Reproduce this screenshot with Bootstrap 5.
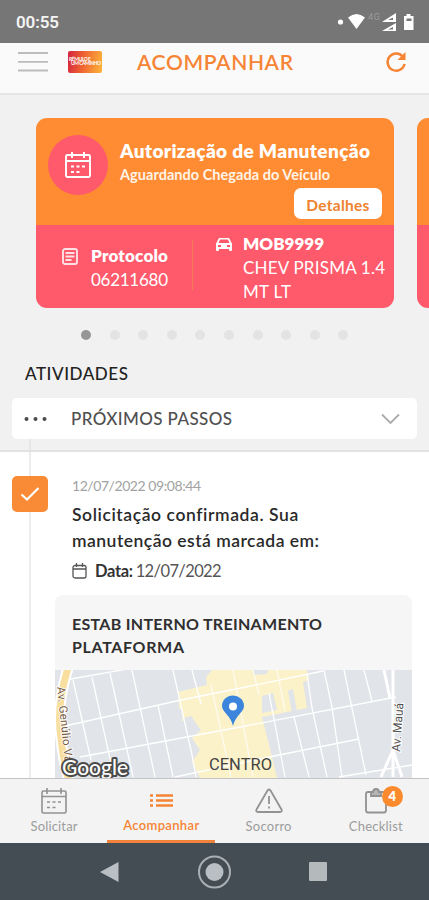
<!DOCTYPE html>
<html lang="pt-BR">
<head>
<meta charset="utf-8">
<meta name="viewport" content="width=device-width, initial-scale=1">
<title>Acompanhar</title>
<link href="https://cdn.jsdelivr.net/npm/bootstrap@5.3.0/dist/css/bootstrap.min.css" rel="stylesheet">
<style>
:root{--org:#ff8c33;--pink:#ff5a6b}
html,body{height:100%}
body{font-family:Lato,"Open Sans",sans-serif;background:#fff;overflow:hidden;color:#333}
svg{display:block;flex:none}
.t{white-space:nowrap;display:block}
.screen{height:900px;width:429px;overflow:hidden}
.statusbar{height:43px;background:#767676;padding:3px 14px 0 16px;font-family:Roboto,sans-serif}
.clock{font-size:17px;font-weight:600;color:#f4f4f4}
.topbar{height:52px;background:#fafafa;border-bottom:2px solid #e6e6e6;padding:0 22px 13px 18px}
.page-title{font-size:21px;font-weight:600;color:#f58434;line-height:24px}
.brand{width:34px;height:22px;border-radius:2px;background:linear-gradient(100deg,#d3233f,#ef6531 45%,#fdb63c);font-size:5px;line-height:4.6px;color:#fff;font-weight:700;padding:6px 0 0 1px;margin-left:20px}
.hero{height:357px;background:#f1f1f1;border-bottom:2px solid #e2e2e2;padding-top:23px}
.slide{width:358px;height:190px;border-radius:11px;overflow:hidden;color:#fff;flex:none}
.slide-top{height:107px;background:var(--org);padding:17px 12px 0}
.slide-bottom{height:83px;background:var(--pink)}
.disc{width:60px;height:60px;background:var(--pink)}
.ttl{font-size:19px;font-weight:800;line-height:24px}
.sub{font-size:14.5px;font-weight:700;line-height:18px;margin-top:3px;color:#fff3e6}
.btn-det{width:88px;height:31px;background:#fff;color:#ee8330;font-size:15.5px;font-weight:700;border-radius:7px;padding:0;line-height:35px;border:0}
.f17{font-size:17px;line-height:24px}
.f17 b{font-weight:800}
.rule{width:1px;height:50px;background:#f47a55}
.dots{gap:18.6px;padding-left:81px;margin-top:22px}
.dots i{width:10px;height:10px;border-radius:50%;background:#e3e3e3}
.dots i:first-child{background:#969696}
.section-name{font-size:17px;line-height:22px;font-weight:500;color:#222;margin:23px 0 0 25px}
.picker{height:41px;background:#fff;border-radius:5px;margin:13px 12px 0;padding:0 17px 0 12px;color:#505050;font-size:17px;font-weight:500}
.timeline{height:326px;overflow:hidden}
.rail{width:60px;flex:none;background:linear-gradient(#ededed,#ededed) 29px 0/2px 100% no-repeat;padding:24px 0 0 12px}
.tick{width:36px;height:36px;border-radius:5px;background:#f98b37}
.stamp{font-size:14px;line-height:18px;color:#a2a2a2}
.msg{font-size:17.5px;line-height:26px;color:#2a2a2a;font-weight:600}
.place{width:357px;margin-left:-5px;background:#f6f6f6;border-radius:8px 8px 0 0;color:#2f2f2f}
.place-name{font-size:16px;line-height:23px;font-weight:700;height:75px;padding:17px 0 0 17px}
.tabs{height:65px;background:#f3f3f3;border-top:1px solid #c4c4c4}
.tab{width:107.25px;color:#9c9c9c;font-size:13px;border-bottom:3px solid transparent;padding:9px 0 0 1px}
.tab.on{color:#f58434;border-color:#f08339;font-weight:600}
.tab .t{line-height:18px;margin-top:3px}
.tab.on .t{margin-top:2px}
.count{top:-2px;left:17px;width:21px;height:21px;background:#fb8a2c;color:#fff;font-size:13px;line-height:21px;font-weight:800}
.sysbar{height:57px;background:#444d54;gap:78px;padding-left:100px}
</style>
</head>
<body>
<div class="screen d-flex flex-column">
  <header class="statusbar d-flex align-items-center justify-content-between">
    <span class="clock t"><span id="a0">00:55</span></span>
    <svg width="78" height="22" viewBox="0 0 78 22" fill="#fff">
      <circle cx="3.500" cy="10" r="2.600"/>
      <path d="M11 5.500q8.500-7 17 0L19.500 17z"/>
      <text x="31" y="8" font-size="9" fill="#9b9b9b" textLength="12">4G</text>
      <path d="M59 1v9H45zM59 11v8H45z"/><path d="M56 5.500v2.500h-5zM56 15v2.500h-5z" fill="#767676"/>
      <path d="M69.500 2h4v2h3v14h-9.500V4h2.500z"/><path d="M69.500 6.500h5v2.500h-5z" fill="#777"/>
    </svg>
  </header>
  <nav class="topbar d-flex align-items-center">
    <svg width="30" height="22" viewBox="0 0 30 22" stroke="#bcbcbc" stroke-width="1.800"><path d="M0 2h30M0 10.800h30M0 19.500h30"/></svg>
    <div class="brand"><span class="t"><span id="d1">RÊMULO E</span></span><span class="t" style="margin-left:2px"><span id="d2">UM CAMINHO</span></span></div>
    <span class="page-title t" style="margin-left:35px" id="pt">ACOMPANHAR</span>
    <svg class="ms-auto" width="22" height="22" viewBox="0 0 22 22" fill="none" stroke="#f58434" stroke-width="2.400"><path d="M18.300 6.200A8.600 8.600 0 1 0 19.600 13"/><path d="M20.500 1v8h-8z" fill="#f58434" stroke="none"/></svg>
  </nav>

  <section class="hero">
    <div class="d-flex overflow-hidden" style="padding-left:36px;gap:23px">
      <article class="slide">
        <div class="slide-top">
          <div class="d-flex">
            <div class="disc rounded-circle d-flex align-items-center justify-content-center">
              <svg width="26" height="28" viewBox="0 0 26 28" fill="none" stroke="#fff" stroke-width="1.900"><rect x="1" y="4" width="24" height="22" rx="1.500"/><path d="M1 10h24M7 1v6M19 1v6"/><path d="M6 15.500h3m2.500 0h3m2.500 0h3M6 21h3m2.500 0h3"/></svg>
            </div>
            <div style="margin:4px 0 0 12px"><span class="ttl t"><span id="a1">Autorização de Manutenção</span></span><span class="sub t"><span id="a2">Aguardando Chegada do Veículo</span></span></div>
          </div>
          <div class="d-flex justify-content-end"><button class="btn btn-det" style="margin-top:-7px"><span id="a3">Detalhes</span></button></div>
        </div>
        <div class="slide-bottom d-flex">
          <svg style="margin:23px 0 0 26px" width="16" height="17" viewBox="0 0 16 17" fill="none" stroke="#ffe1e4" stroke-width="1.900"><rect x="1" y="1" width="14" height="15" rx="2"/><path d="M3.500 5h9M3.500 8.500h9M3.500 12h6"/></svg>
          <div class="f17" style="margin:19px 0 0 13px;width:101px"><b class="t"><span id="a4">Protocolo</span></b><span class="t"><span id="a5">06211680</span></span></div>
          <div class="rule" style="margin-top:15px"></div>
          <svg style="margin:13px 0 0 23px" width="16" height="13" viewBox="0 0 16 13" fill="#fff"><path fill-rule="evenodd" d="M3 0h10l3 5.500V12q0 1-1 1h-1q-1 0-1-1v-1H3v1q0 1-1 1H1q-1 0-1-1V5.500zM4 1.500 2.500 5h11L12 1.500zM2 7v2h3V7zm9 0v2h3V7z"/></svg>
          <div class="f17" style="margin:7px 0 0 11px"><b class="t"><span id="a6">MOB9999</span></b><span class="t"><span id="a7">CHEV PRISMA 1.4</span></span><span class="t"><span id="a8">MT LT</span></span></div>
        </div>
      </article>
      <article class="slide"><div class="slide-top"></div><div class="slide-bottom"></div></article>
    </div>
    <div class="dots d-flex"><i></i><i></i><i></i><i></i><i></i><i></i><i></i><i></i><i></i><i></i></div>
    <div class="section-name t"><span id="a9">ATIVIDADES</span></div>
    <div class="picker d-flex align-items-center">
      <svg width="24" height="6" viewBox="0 0 24 6" fill="#4b4b4b"><circle cx="2.500" cy="3" r="2"/><circle cx="11.500" cy="3" r="2"/><circle cx="20.500" cy="3" r="2"/></svg>
      <span class="t" style="margin-left:23px"><span id="b1">PRÓXIMOS PASSOS</span></span>
      <svg class="ms-auto" width="19" height="12" viewBox="0 0 19 12" fill="none" stroke="#ababab" stroke-width="1.800"><path d="m1 1.500 8.500 8.500L18 1.500"/></svg>
    </div>
    <div style="margin-left:29px;width:2px;height:11px;background:#e6e6e6"></div>
  </section>

  <main class="timeline d-flex">
    <div class="rail"><div class="tick d-flex align-items-center justify-content-center"><svg width="20" height="16" viewBox="0 0 20 16" fill="none" stroke="#fff" stroke-width="2.200"><path d="m1.500 8.500 5.500 5L18.500 2"/></svg></div></div>
    <div>
      <div style="padding:25px 0 0 12px">
        <span class="stamp t"><span id="b2">12/07/2022 09:08:44</span></span>
        <span class="msg t" style="margin-top:7px"><span id="b3">Solicitação confirmada. Sua</span></span>
        <span class="msg t"><span id="b4">manutenção está marcada em:</span></span>
        <div class="d-flex align-items-center" style="margin-top:5px;height:24px;font-size:16.500px">
          <svg width="15" height="16" viewBox="0 0 15 16" fill="none" stroke="#555" stroke-width="1.300"><rect x="1" y="2.500" width="13" height="12.500" rx="2"/><path d="M1 6h13M4.500 0v4M10.500 0v4"/></svg>
          <span class="t" style="margin-left:8px"><b id="b5">Data:</b></span><span class="t" style="margin-left:3px;color:#555"><span id="b6">12/07/2022</span></span>
        </div>
      </div>
      <div class="place" style="margin-top:12px">
        <div class="place-name"><span class="t"><span id="b7">ESTAB INTERNO TREINAMENTO</span></span><span class="t"><span id="b8">PLATAFORMA</span></span></div>
        <svg width="357" height="108" viewBox="0 0 357 108">
          <rect width="357" height="108" fill="#e1e4e9"/>
          <path fill="#fbf2ca" d="M123 22l29-7-1-8 6-7h95l2 10-6 2 4 26-45 9 9 36 6 25h-77l-8-16 8-12-8-12 9-8-8-11-11 2 1-11-4-2z"/>
          <path fill="#e1e4e9" d="M198 5l14-1 1-4h-15zM207 26l11-3 4 17-15 3zM233 21l5-2 4 22-5 2zM128 48l9-2 4 13-8 4zM215 67l6-2 4 8-8 1z"/>
          <g fill="none" stroke="#fff" stroke-width="1.300">
            <path d="M10 10 78-2M10 56l116-26 60-12 82-17M25 87l160-30 156-30M120 107l104-22 80-16M284 107l73-12"/>
            <path d="m18 10 18 80M37 7l22 100M55 3l23 104M77 0l23 107M118 0l19 85 4 22M103 35l15 72M137 0l9 34M252 4l5 34 15 69M269 0l8 37 10 70M289 0l22 105M309 0l8 31M214 23l16 84M239 47l15 60"/>
            <path d="M156 15l20 92M178 0l20 107M198 0l6 25M222 0l8 41" stroke="#fffaf0"/>
            <path d="m329 0 6 28M338 0v107M338 80l-12 27M338 80l9 27" stroke-width="3"/>
          </g>
          <path d="M13-2Q1 36 6 68q2 22 8 42" fill="none" stroke="#fff" stroke-width="11"/>
          <path d="M13-2Q1 36 6 68q2 22 8 42" fill="none" stroke="#f8dfa0" stroke-width="7"/>
          <g font-family="Roboto,sans-serif" fill="#555">
            <text transform="translate(2 17) rotate(84)" font-size="11.500" fill="#77583b" stroke="#fff" stroke-width="1.500" paint-order="stroke" textLength="76">Av. Genúlio Va</text>
            <text transform="translate(345 82) rotate(-86)" font-size="12" stroke="#fff" stroke-width="2" paint-order="stroke" textLength="49">Av. Mauá</text>
            <text x="154" y="100" font-size="16.500" fill="#444" textLength="63" lengthAdjust="spacingAndGlyphs">CENTRO</text>
          </g>
          <path d="M178 56c-2-10-11-14-11-20a11 10.500 0 0 1 22 0c0 6-9 10-11 20z" fill="#3b86dc"/><circle cx="178" cy="36.500" r="4" fill="#fff"/>
          <text x="7" y="105" font-family="Lato,sans-serif" font-size="21" font-weight="500" fill="#fff" stroke="#4a4a4a" stroke-width="4" stroke-linejoin="round" paint-order="stroke" textLength="66" lengthAdjust="spacingAndGlyphs">Google</text>
        </svg>
      </div>
    </div>
  </main>

  <nav class="tabs d-flex">
    <div class="tab d-flex flex-column align-items-center">
      <svg width="26" height="26" viewBox="0 0 26 26" fill="none" stroke="#929292" stroke-width="1.600"><rect x="1" y="3" width="24" height="22" rx="1.500"/><path d="M1 8.500h24M6 0v6M20 0v6M6 14h3m2.500 0h3m2.500 0h3M6 19.500h3m2.500 0h3"/></svg>
      <span class="t"><span id="c1">Solicitar</span></span></div>
    <div class="tab on d-flex flex-column align-items-center">
      <svg width="23" height="26" viewBox="0 0 23 26" stroke="#f58434" stroke-width="2.400"><path d="M6 7.500h17M6 12.500h17M6 17.500h17M0 7.500h3M0 12.500h3M0 17.500h3"/></svg>
      <span class="t"><span id="c2">Acompanhar</span></span></div>
    <div class="tab d-flex flex-column align-items-center">
      <svg width="28" height="26" viewBox="0 0 28 26" fill="none" stroke="#929292" stroke-width="1.800" stroke-linejoin="round"><path d="M12.500 2.500q1.500-2 3 0L26.500 21.500q1 2.500-1.500 2.500H3q-2.500 0-1.500-2.500zM14 8v8M14 18.500v2"/></svg>
      <span class="t"><span id="c3">Socorro</span></span></div>
    <div class="tab d-flex flex-column align-items-center">
      <div class="position-relative"><svg width="22" height="26" viewBox="0 0 22 26" fill="none" stroke="#929292" stroke-width="1.800"><path d="M6 4H3Q1 4 1 6v16q0 2.500 2 2.500h16q2 0 2-2.500V6q0-2-2-2h-3"/><path d="M6 8V4h2q0-3 3-3t3 3h2v4z" fill="#b5b5b5"/></svg><span class="count position-absolute rounded-circle text-center">4</span></div>
      <span class="t"><span id="c4">Checklist</span></span></div>
  </nav>
  <footer class="sysbar d-flex align-items-center">
    <svg width="19" height="20" viewBox="0 0 19 20" fill="#b9bfc3"><path d="M18.500 0v20L0 10z"/></svg>
    <svg width="34" height="34" viewBox="0 0 34 34" fill="#b9bfc3"><circle cx="17.500" cy="17" r="15.500" fill="none" stroke="#a9b0b5" stroke-width="2"/><circle cx="17.500" cy="17" r="9"/></svg>
    <svg width="18" height="19" viewBox="0 0 18 19"><rect width="18" height="19" rx="1" fill="#b4b9bc"/></svg>
  </footer>
</div>
<script src="https://cdn.jsdelivr.net/npm/bootstrap@5.3.0/dist/js/bootstrap.bundle.min.js"></script>
<script>
document.fonts.ready.then(function () {
  var widths = {a0:43,d1:22,d2:30,pt:156,a1:250,a2:210,a3:63,a4:77,a5:77,a6:81,a7:142,a8:48,a9:103,b1:161,b2:129,b3:226,b4:247,b5:38,b6:86,b7:250,b8:112,c1:47,c2:76,c3:46,c4:54};
  Object.keys(widths).forEach(function (id) {
    var el = document.getElementById(id);
    el.style.letterSpacing = '0px';
    var r = document.createRange(); r.selectNodeContents(el);
    var n = el.textContent.length;
    el.style.letterSpacing = ((widths[id] - r.getBoundingClientRect().width) / (n - 1)).toFixed(3) + 'px';
  });
});
</script>
</body>
</html>
